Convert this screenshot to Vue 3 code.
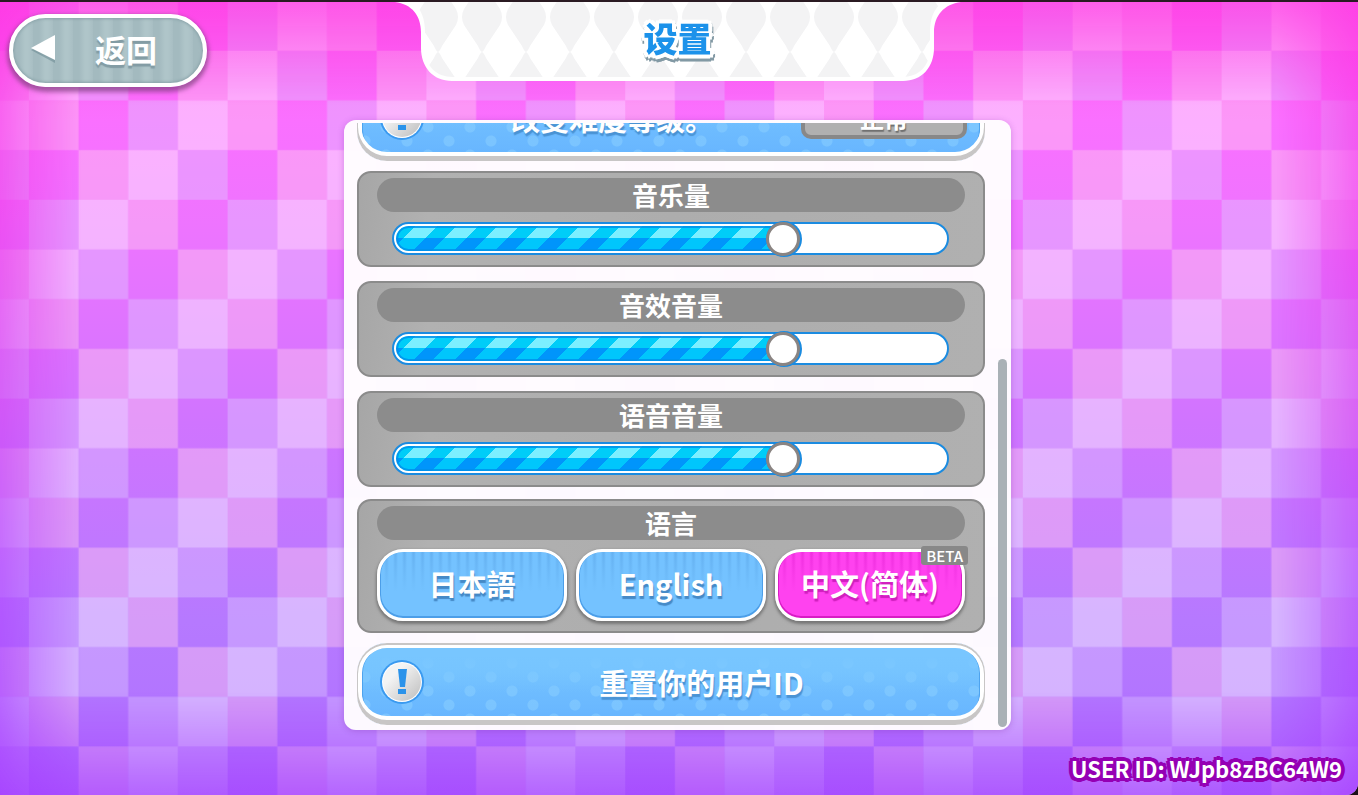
<script setup>
import { ref } from "vue";

const volumes = ref([
  { id: "music", label: "音乐量", value: 72 },
  { id: "effect", label: "音效音量", value: 72 },
  { id: "voice", label: "语音音量", value: 72 }
]);

const languages = [
  { code: "ja", label: "日本語" },
  { code: "en", label: "English" },
  { code: "zh", label: "中文(简体)", beta: true }
];

// tints of the background squares, the block repeats every four
const tints = ["vlpd", "lvdp", "pdvl", "dplv"];

const language = ref("zh");
const difficulty = ref("正常");
const userId = ref("WJpb8zBC64W9");

function toggleDifficulty() {
  difficulty.value = difficulty.value === "正常" ? "困难" : "正常";
}
</script>

<template>
  <div class="page">
    <svg class="squares" aria-hidden="true">
      <defs>
        <pattern id="squares" x="29" y="-1" width="200" height="200" patternUnits="userSpaceOnUse" patternTransform="scale(0.994)">
          <template v-for="(row, y) in tints" :key="row">
            <rect v-for="(tint, x) in row" :key="x" :class="tint" :x="x * 50" :y="y * 50" width="50" height="50" />
          </template>
        </pattern>
      </defs>
      <rect width="100%" height="100%" fill="url(#squares)" />
    </svg>
    <div class="vignette" />

    <header class="top">
      <button type="button" class="back">
        <svg class="back-arrow" viewBox="0 0 24 28" aria-hidden="true">
          <path d="M24 3v25L0 15z" fill="#6f8d96" opacity="0.6" />
          <path d="M24 0v25L0 13z" fill="#fff" />
        </svg>
        <span class="back-text">返回</span>
      </button>

      <div class="banner">
        <svg class="banner-bg" viewBox="0 0 566 79" aria-hidden="true">
          <defs>
            <pattern id="harlequin" x="21" y="-20" width="44" height="70" patternUnits="userSpaceOnUse">
              <path d="M22 0Q24 1 26 6L40 27Q44 35 40 43L26 64Q24 69 22 70Q20 69 18 64L4 43Q0 35 4 27L18 6Q20 1 22 0z" fill="#f3f3f4" />
            </pattern>
          </defs>
          <path d="M0 0C17 2 26 14 26 30V46C26 65 38 79 57 79H508C527 79 539 65 539 46V30C539 14 549 2 566 0z" fill="#fff" />
          <path d="M18 0C27 8 30 18 30 30V46C30 64 41 75 58 75H507C524 75 535 64 535 46V30C535 18 538 8 547 0z" fill="url(#harlequin)" />
        </svg>
        <h1 class="title">设置</h1>
      </div>
    </header>

    <main class="panel">
      <div class="list">
        <section class="card">
          <svg class="mark" viewBox="0 0 44 44" aria-hidden="true">
            <circle cx="22" cy="22" r="22" fill="#3a9af0" />
            <circle cx="22" cy="22" r="20" fill="#fff" />
            <circle cx="22" cy="22" r="19" fill="url(#silver)" />
            <path d="M18 9h9l-2 18h-5z" fill="#2b93ea" />
            <path d="M18 29h8v5h-8z" fill="#2b93ea" />
          </svg>
          <span class="card-text">改变难度等级。</span>
          <button type="button" class="level" @click="toggleDifficulty">{{ difficulty }}</button>
        </section>

        <div class="volumes">
          <section v-for="item in volumes" :key="item.id" class="box">
            <label class="box-title" :for="item.id">{{ item.label }}</label>
            <div class="slider">
              <div class="fill" :style="{ width: item.value + '%' }" />
              <input :id="item.id" v-model="item.value" type="range" min="0" max="100" />
            </div>
          </section>
        </div>

        <section class="box">
          <h2 class="box-title">语言</h2>
          <div class="langs">
            <button
              v-for="lang in languages"
              :key="lang.code"
              type="button"
              class="lang"
              :class="{ active: lang.code === language }"
              @click="language = lang.code"
            >
              {{ lang.label }}
              <span v-if="lang.beta" class="beta">BETA</span>
            </button>
          </div>
        </section>

        <button type="button" class="card reset">
          <svg class="mark" viewBox="0 0 44 44" aria-hidden="true">
            <defs>
              <linearGradient id="silver" x1="0" y1="0" x2="1" y2="1">
                <stop offset="0.3" stop-color="#f4f4f4" />
                <stop offset="1" stop-color="#bdbdbd" />
              </linearGradient>
            </defs>
            <circle cx="22" cy="22" r="22" fill="#3a9af0" />
            <circle cx="22" cy="22" r="20" fill="#fff" />
            <circle cx="22" cy="22" r="19" fill="url(#silver)" />
            <path d="M18 9h9l-2 18h-5z" fill="#2b93ea" />
            <path d="M18 29h8v5h-8z" fill="#2b93ea" />
          </svg>
          <span class="card-text">重置你的用户ID</span>
        </button>
      </div>

      <div class="scroll">
        <div class="scroll-thumb" />
      </div>
    </main>

    <footer class="user">USER ID: {{ userId }}</footer>
  </div>
</template>

<style>
html {
  background: #1c1018;
}
</style>

<style scoped>
.page {
  position: relative;
  isolation: isolate;
  display: flex;
  flex-direction: column;
  box-sizing: border-box;
  height: 100vh;
  min-height: 480px;
  padding-right: 3px;
  overflow: hidden;
  border-top: 2px solid #2a1a22;
  border-bottom-right-radius: 12px;
  background: linear-gradient(#ff62ee, #fa70ff 15%, #ee74ff 28%, #d074ff 53%, #b679ff 78%, #ae70ff);
  font-family: "Noto Sans CJK SC", sans-serif;
  font-weight: 700;
  color: #fff;
}

.squares,
.vignette {
  position: absolute;
  inset: 0;
  z-index: -1;
  width: 100%;
  height: 100%;
}

.l {
  fill: rgba(255, 255, 255, 0.45);
}

.p {
  fill: rgba(255, 200, 240, 0.44);
}

.v {
  fill: rgba(222, 200, 255, 0.4);
}

.d {
  fill: none;
}

.vignette {
  background: linear-gradient(#ff36e4, #f03cec 25%, #d048f4 52%, #b048ff 75%, #a43cff);
  mask-image:
    linear-gradient(rgba(0, 0, 0, 0.65), transparent 13%),
    linear-gradient(0deg, rgba(0, 0, 0, 0.65), transparent 13%),
    linear-gradient(90deg, rgba(0, 0, 0, 0.65), transparent 6%),
    linear-gradient(270deg, rgba(0, 0, 0, 0.65), transparent 6%);
}

.top {
  display: grid;
  grid-template-columns: 1fr auto 1fr;
  align-items: start;
}

.back {
  display: flex;
  align-items: center;
  justify-self: start;
  width: 198px;
  height: 73px;
  margin: 12px 0 0 9px;
  padding: 0 26px 4px 18px;
  border: 4px solid #fff;
  border-radius: 37px;
  background: repeating-linear-gradient(90deg, #a3babf 0 6px, #afc5c9 12px 15px, #a8bec3 20px);
  box-shadow: inset 0 0 3px 1px #8aa3a9, 0 3px 4px 2px rgba(120, 60, 120, 0.65);
  color: #fff;
  font: inherit;
  cursor: pointer;
}

.back-arrow {
  flex: none;
  width: 24px;
  height: 28px;
}

.back-text {
  flex: 1;
  padding-left: 20px;
  font-size: 31px;
  line-height: 36px;
  text-shadow: 0 3px 1px #839ca4;
}

.banner {
  display: grid;
  justify-items: center;
}

.banner-bg {
  grid-area: 1 / 1;
  width: 566px;
  height: 79px;
}

.title {
  grid-area: 1 / 1;
  margin: 12px 0 0;
  font-size: 34px;
  font-weight: 900;
  line-height: 48px;
  color: #1c92ea;
  text-shadow: 4px 0 #fff, -4px 0 #fff, 0 4px #fff, 0 -4px #fff, 3px 3px #fff, -3px 3px #fff, 3px -3px #fff, -3px -3px #fff;
  filter: drop-shadow(1px 3px 0 #8299a4);
}

.panel {
  display: flex;
  flex: 1;
  box-sizing: border-box;
  width: 667px;
  min-height: 0;
  margin: 33px auto 0;
  padding: 3px 4px 3px 13px;
  border-radius: 12px;
  background: rgba(255, 253, 255, 0.97);
  box-shadow: 0 1px 6px rgba(120, 40, 160, 0.3);
}

/* the list is scrolled to its end */
.list {
  display: flex;
  flex: 1;
  flex-direction: column;
  justify-content: flex-end;
  gap: 10px;
  padding-bottom: 2px;
  overflow: hidden;
}

.card {
  display: flex;
  flex: none;
  align-items: center;
  box-sizing: border-box;
  width: 100%;
  height: 82px;
  padding: 0 18px 4px 23px;
  border: 0;
  border-radius: 30px;
  background:
    linear-gradient(#78c6ff 15%, transparent 60%),
    radial-gradient(circle, rgba(140, 208, 255, 0.5) 5px, transparent 6px) 8px 6px / 42px 28px,
    radial-gradient(circle, rgba(140, 208, 255, 0.5) 5px, transparent 6px) 29px 20px / 42px 28px,
    linear-gradient(#74c2ff 30%, #66b4ff);
  box-shadow: inset 0 1px 0 1px #c8c6c6, inset 0 -4px 0 1px #c8c6c6, inset 0 0 0 5px #fff, inset 0 -5px 0 4px #fff, inset 0 -1px 0 6px #4da3ee;
  color: #fff;
  font: inherit;
}

.reset {
  padding-right: 6px;
  cursor: pointer;
}

.mark {
  flex: none;
  width: 44px;
  height: 44px;
}

.card-text {
  flex: 1;
  font-size: 29px;
  line-height: 40px;
  text-align: center;
  text-shadow: 1px 3px 1px #4a93d4;
}

.level {
  width: 166px;
  height: 42px;
  padding: 0;
  border: 4px solid #888;
  border-radius: 10px;
  background: #b0b0b0;
  color: #fff;
  font: inherit;
  font-size: 24px;
  line-height: 28px;
  text-shadow: 1px 2px 1px #707070;
  cursor: pointer;
}

.volumes {
  display: flex;
  flex: none;
  flex-direction: column;
  gap: 14px;
  padding-bottom: 2px;
}

.box {
  flex: none;
  padding: 5px 18px 10px;
  border: 2px solid #8b8b8b;
  border-radius: 14px;
  background: linear-gradient(100deg, #a6a6a6, #b1b1b1 12%, #adadad 50%, #b0b0b0);
}

.box-title {
  display: block;
  height: 34px;
  margin: 0;
  border-radius: 17px;
  background: #8c8c8c;
  font-size: 26px;
  font-weight: 700;
  line-height: 34px;
  text-align: center;
}

.slider {
  display: grid;
  grid-template-rows: 29px;
  align-items: center;
  margin: 10px 16px 0 15px;
  border: 2px solid #1b8be0;
  border-radius: 17px;
  background: #fff;
}

.fill {
  grid-area: 1 / 1;
  box-sizing: border-box;
  height: 25px;
  margin-left: 2px;
  border-radius: 13px 0 0 13px;
  background:
    repeating-linear-gradient(135deg, #00cdf8 0 14px, #7cefff 14px 29px) 0 0 / 100% 12px no-repeat,
    repeating-linear-gradient(135deg, #0095fb 0 14px, #00c6fc 14px 29px);
  box-shadow: inset 0 0 0 2px rgba(0, 145, 235, 0.85);
}

.slider input {
  grid-area: 1 / 1;
  height: 36px;
  margin: 0 1px 0 -2px;
  background: none;
  appearance: none;
  cursor: pointer;
}

.slider input::-webkit-slider-thumb {
  width: 34px;
  height: 34px;
  border: 3px solid #8a8482;
  border-radius: 50%;
  background: #fff;
  box-shadow: 1px 0 0 1px #1b8be0;
  appearance: none;
}

.langs {
  display: grid;
  grid-template-columns: repeat(3, 1fr);
  gap: 9px;
  margin-top: 9px;
}

.lang {
  position: relative;
  height: 72px;
  padding: 0 0 4px;
  border: 3px solid #fff;
  border-radius: 26px;
  background:
    linear-gradient(transparent, #74c2ff 60%),
    repeating-linear-gradient(90deg, #74c2ff 0 4px, #66b2f2 6px 7px, #74c2ff 9px);
  box-shadow: inset 0 -1px 0 1px #4c9ee8, 0 2px 3px 1px #777;
  color: #fff;
  font: inherit;
  font-size: 29px;
  text-shadow: 1px 3px 1px #4589c6;
  cursor: pointer;
}

.lang.active {
  background:
    linear-gradient(transparent, #ff42ef 60%),
    repeating-linear-gradient(90deg, #ff42ef 0 4px, #f030e0 6px 7px, #ff42ef 9px);
  box-shadow: inset 0 -1px 0 1px #d81cc4, 0 2px 3px 1px #777;
  text-shadow: 1px 3px 1px #cf1fbd;
}

.beta {
  position: absolute;
  top: -6px;
  right: -6px;
  padding: 0 5px;
  border-radius: 3px;
  background: #888;
  font-size: 15px;
  font-weight: 500;
  line-height: 19px;
  text-shadow: none;
}

.scroll {
  display: flex;
  flex: none;
  flex-direction: column;
  justify-content: flex-end;
  width: 9px;
  margin-left: 13px;
}

.scroll-thumb {
  height: 61%;
  border-radius: 5px;
  background: #a9b1b6;
}

.user {
  padding: 20px 13px 9px;
  font-size: 22px;
  line-height: 36px;
  text-align: right;
  text-shadow: 4px 0 #9500b4, -4px 0 #9500b4, 0 4px #9500b4, 0 -4px #9500b4, 3px 3px #9500b4, -3px 3px #9500b4, 3px -3px #9500b4, -3px -3px #9500b4;
}
</style>
